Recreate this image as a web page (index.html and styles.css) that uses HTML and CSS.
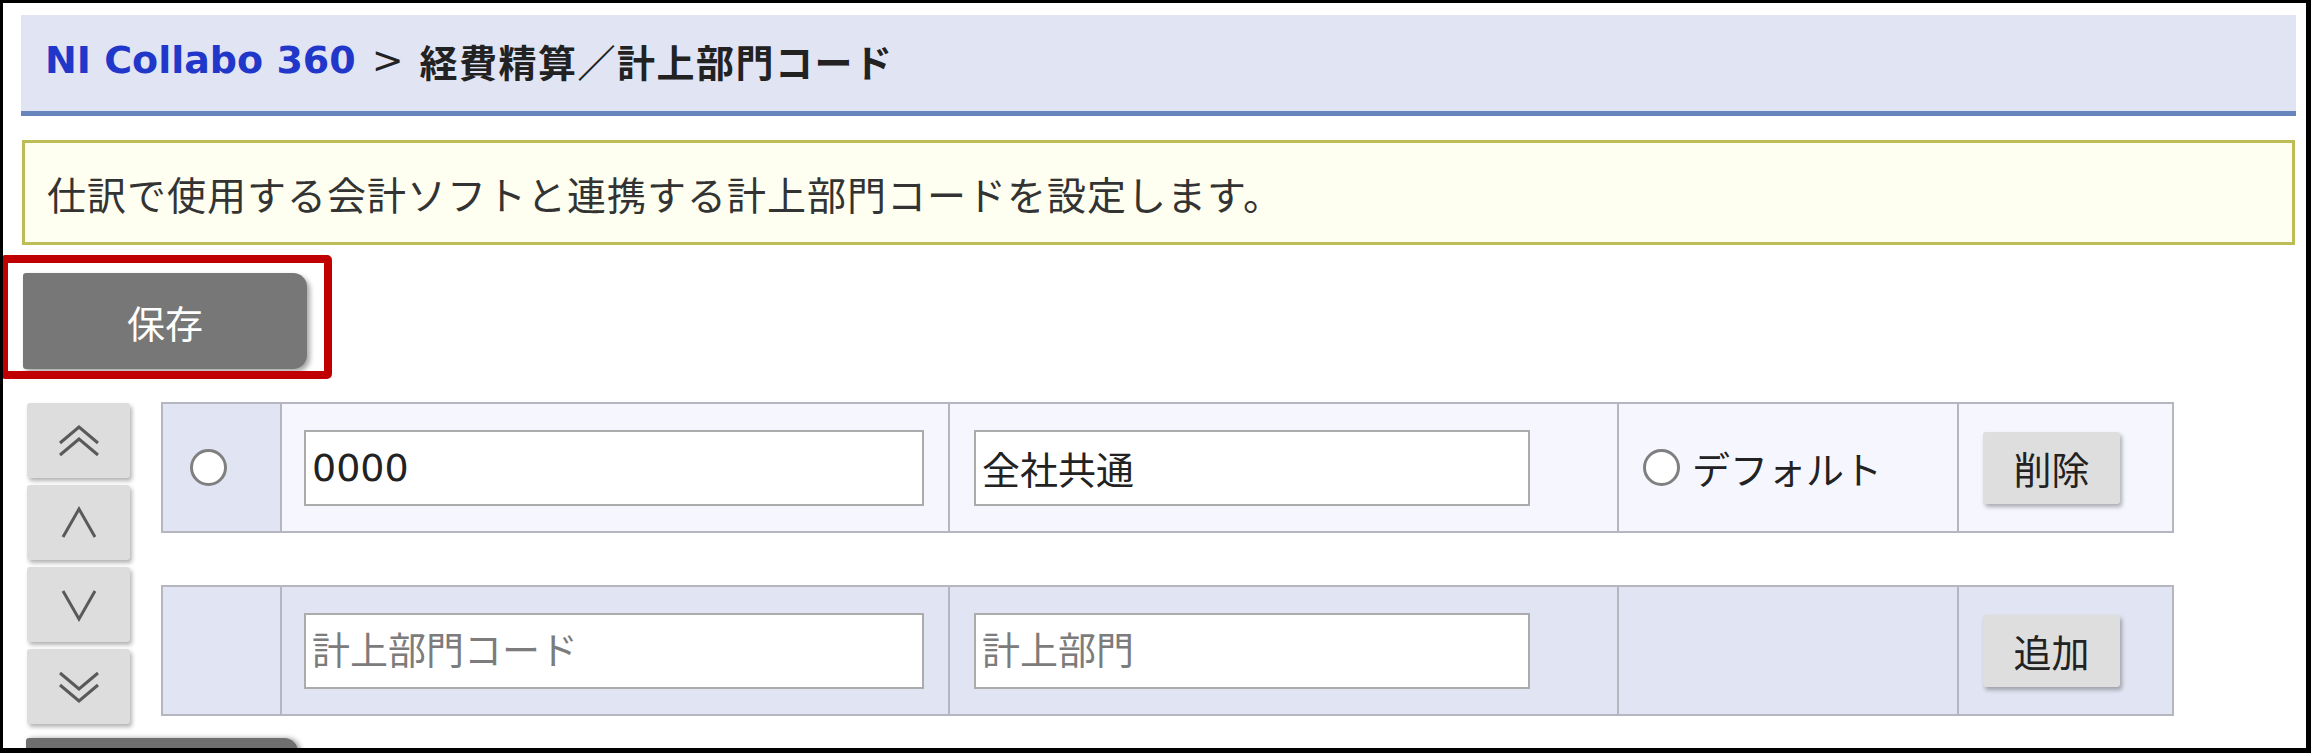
FILE: index.html
```html
<!DOCTYPE html>
<html lang="ja">
<head>
    <meta charset="UTF-8">
    <meta name="viewport" content="width=device-width, initial-scale=1.0">
    <title>経費精算／計上部門コード</title>

    <link rel="stylesheet" href="styles.css">
</head>
<body>
    <div class="frame">
        <div class="page">
            <div class="title-bar">
                <a class="app-link">NI Collabo 360</a><span class="sep">&gt;</span><span class="title">経費精算／計上部門コード</span>
            </div>

            <div class="notice">仕訳で使用する会計ソフトと連携する計上部門コードを設定します。</div>

            <div class="save-area">
                <button class="btn-save">保存</button>
                <span class="mark"></span>
            </div>

            <div class="editor">
                <div class="movers">
                    <button class="btn-move" title="先頭へ">
                        <svg width="42" height="36" viewBox="0 0 42 36"><polyline points="2,20 21,4 40,20"/><polyline points="2,32 21,16 40,32"/></svg>
                    </button>
                    <button class="btn-move" title="上へ">
                        <svg width="38" height="34" viewBox="0 0 38 34"><polyline points="3,31 19,3 35,31"/></svg>
                    </button>
                    <button class="btn-move" title="下へ">
                        <svg width="38" height="34" viewBox="0 0 38 34"><polyline points="3,3 19,31 35,3"/></svg>
                    </button>
                    <button class="btn-move" title="末尾へ">
                        <svg width="42" height="36" viewBox="0 0 42 36"><polyline points="2,4 21,20 40,4"/><polyline points="2,16 21,32 40,16"/></svg>
                    </button>
                </div>

                <div class="rows">
                    <div class="row">
                        <div class="cell sel"><input type="radio" name="sel"></div>
                        <div class="cell"><input class="code" type="text" value="0000"></div>
                        <div class="cell"><input class="name" type="text" value="全社共通"></div>
                        <div class="cell def"><label><input type="radio" name="def">デフォルト</label></div>
                        <div class="cell act"><button class="btn">削除</button></div>
                    </div>
                    <div class="row new">
                        <div class="cell sel"></div>
                        <div class="cell"><input class="code" type="text" placeholder="計上部門コード"></div>
                        <div class="cell"><input class="name" type="text" placeholder="計上部門"></div>
                        <div class="cell def"></div>
                        <div class="cell act"><button class="btn">追加</button></div>
                    </div>
                </div>
            </div>

            <!-- second save button, only its top edge is on screen -->
            <button class="btn-save-bottom" aria-label="保存"></button>
        </div>
    </div>
</body>
</html>
```

FILE: styles.css
```css
* {
    box-sizing: border-box;
    margin: 0;
    padding: 0;
}

body {
    font-family: "DejaVu Sans", "Noto Sans CJK JP", sans-serif;
    color: #222;
    background: #fff;
}

.frame {
    position: relative;
    width: 2311px;
    height: 753px;
    border: solid #000;
    border-width: 3px 5px 5px 3px;
    overflow: hidden;
}

.page {
    padding: 12px 10px 0 18px;
}

/* header */
.title-bar {
    height: 101px;
    display: flex;
    align-items: center;
    padding: 0 0 6px 24px;
    background: #e1e4f2;
    border-bottom: 5px solid #6585bc;
    font-size: 38px;
    font-weight: bold;
}

.app-link {
    color: #2137c9;
}

.sep {
    margin: 0 16px;
    font-weight: normal;
}

.title {
    letter-spacing: 1.5px;
}

.notice {
    height: 105px;
    margin: 24px 1px 0;
    padding-left: 22px;
    display: flex;
    align-items: center;
    background: #fefff0;
    border: 3px solid #bdbd58;
    font-size: 39px;
    letter-spacing: 1px;
    color: #333;
}

/* save */
.save-area {
    position: relative;
    margin: 28px 0 0 2px;
    width: 284px;
}

.btn-save {
    width: 284px;
    height: 96px;
    border: none;
    border-radius: 3px 14px 14px 3px;
    background: #777;
    color: #fff;
    font-family: inherit;
    font-size: 38px;
    box-shadow: 3px 3px 5px rgba(0, 0, 0, 0.35);
}

.btn-save-bottom {
    display: block;
    width: 272px;
    height: 40px;
    margin: 14px 0 0 5px;
    border: none;
    border-radius: 3px 14px 14px 3px;
    background: #6f6f6f;
    box-shadow: 3px 0 5px rgba(0, 0, 0, 0.35);
}

.mark {
    position: absolute;
    left: -23px;
    top: -18px;
    width: 332px;
    height: 124px;
    border: 8px solid #c00000;
    border-radius: 5px;
}

/* list editor */
.editor {
    display: flex;
    align-items: flex-start;
    margin-top: 33px;
}

.movers {
    display: flex;
    flex-direction: column;
    gap: 7px;
    margin-left: 6px;
    padding-top: 1px;
}

.btn-move {
    width: 103px;
    height: 75px;
    display: flex;
    align-items: center;
    justify-content: center;
    border: none;
    border-radius: 3px;
    background: #dddddd;
    box-shadow: 2px 3px 4px rgba(0, 0, 0, 0.3);
}

.btn-move svg polyline {
    fill: none;
    stroke: #5a5a5a;
    stroke-width: 3;
}

.rows {
    display: flex;
    flex-direction: column;
    gap: 52px;
    margin-left: 31px;
}

.row {
    display: grid;
    grid-template-columns: 117px 668px 669px 340px 215px;
    height: 131px;
    border: 2px solid #b6b6c0;
    background: #f5f6fe;
}

.row.new {
    background: #e1e4f2;
}

.cell {
    display: flex;
    align-items: center;
    padding-left: 22px;
    border-left: 2px solid #b6b6c0;
    font-size: 38px;
}

.cell.sel {
    border-left: none;
    padding-left: 27px;
    background: #e1e4f2;
}

.cell + .cell + .cell {
    padding-left: 24px;
}

input[type="text"] {
    height: 76px;
    padding: 0 6px;
    border: 2px solid #ababab;
    background: #fff;
    font-family: inherit;
    font-size: 38px;
    color: #222;
}

input::placeholder {
    color: #7c7c7c;
}

.code {
    width: 620px;
}

.name {
    width: 556px;
}

input[type="radio"] {
    appearance: none;
    width: 37px;
    height: 37px;
    border: 3px solid #808080;
    border-radius: 50%;
    background: #fff;
}

.cell.def {
    padding-left: 22px;
}

.cell.def label {
    display: flex;
    align-items: center;
    gap: 12px;
}

.cell.act {
    padding-left: 28px;
}

.btn {
    width: 137px;
    height: 72px;
    border: none;
    border-radius: 3px;
    background: #dedede;
    color: #222;
    font-family: inherit;
    font-size: 38px;
    box-shadow: 2px 3px 4px rgba(0, 0, 0, 0.3);
}
```
